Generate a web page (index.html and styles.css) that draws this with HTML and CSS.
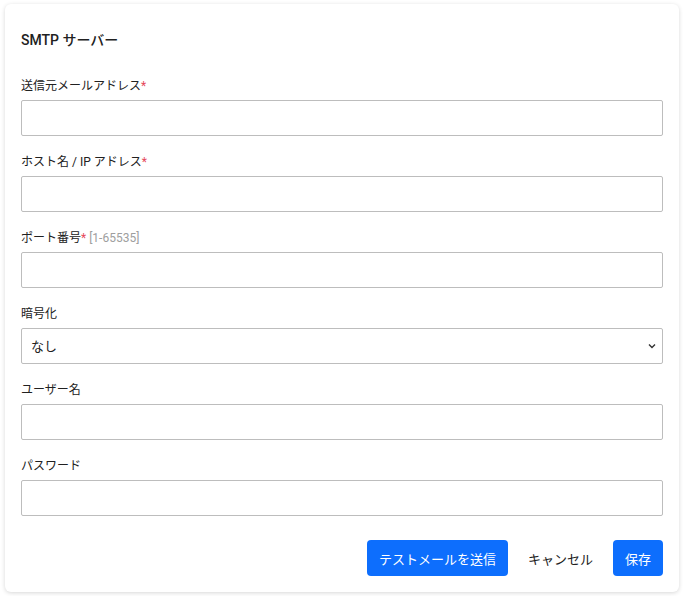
FILE: index.html
```html
<!DOCTYPE html>
<html lang="ja">
<head>
<meta charset="utf-8">
<link rel="stylesheet" href="styles.css">
</head>
<body>
<div class="card">
  <div class="header"><span class="title">SMTP サーバー</span></div>
  <form class="form">
    <div class="field">
      <label class="label">送信元メールアドレス<span class="req">*</span></label>
      <input class="input" type="text">
    </div>
    <div class="field">
      <label class="label">ホスト名 / IP アドレス<span class="req">*</span></label>
      <input class="input" type="text">
    </div>
    <div class="field">
      <label class="label">ポート番号<span class="req">*</span> <span class="hint">[1-65535]</span></label>
      <input class="input" type="text">
    </div>
    <div class="field">
      <label class="label">暗号化</label>
      <div class="select-wrap">
        <select class="input select"><option>なし</option></select>
        <svg class="chev" width="8" height="6" viewBox="0 0 8 6"><path d="M1 1.5 L4 4.5 L7 1.5" fill="none" stroke="#333" stroke-width="1.4"/></svg>
      </div>
    </div>
    <div class="field">
      <label class="label">ユーザー名</label>
      <input class="input" type="text">
    </div>
    <div class="field">
      <label class="label">パスワード</label>
      <input class="input" type="password">
    </div>
    <div class="actions">
      <button type="button" class="btn primary">テストメールを送信</button>
      <button type="button" class="btn plain">キャンセル</button>
      <button type="button" class="btn primary">保存</button>
    </div>
  </form>
</div>
</body>
</html>
```
FILE: styles.css
```css
* { box-sizing: border-box; }
html, body { margin: 0; background: #ffffff; }
body {
  padding: 4px 5px;
  font-family: "Roboto", "Noto Sans CJK JP", sans-serif;
  color: #212121;
}
.card {
  width: 674px;
  height: 588px;
  background: #fff;
  border-radius: 6px;
  box-shadow: 0 1px 4px rgba(0,0,0,0.16);
  padding: 16px;
}
.header { padding: 10px 0; }
.title { font-size: 14px; line-height: 20px; font-weight: 500; display: block; }
.form { margin: 16px 0 0; display: flex; flex-direction: column; gap: 16px; }
.field { display: flex; flex-direction: column; gap: 4px; }
.label { font-size: 12px; line-height: 20px; color: #212121; }
.req { color: #e5485a; }
.hint { color: #9e9e9e; }
.input {
  width: 100%;
  height: 36px;
  border: 1px solid #bdbdbd;
  border-radius: 2px;
  background: #fff;
  font-family: inherit;
  font-size: 13px;
  color: #212121;
  padding: 0 9px;
  margin: 0;
  outline: none;
}
.select-wrap { position: relative; }
.select { appearance: none; -webkit-appearance: none; }
.chev { position: absolute; right: 7px; top: 15px; pointer-events: none; }
.actions { display: flex; justify-content: flex-end; gap: 8px; margin-top: 8px; }
.btn {
  height: 36px;
  padding: 0 12px;
  border: none;
  border-radius: 4px;
  font-family: inherit;
  font-size: 13px;
  cursor: pointer;
}
.primary { background: #0d6efd; color: #fff; }
.plain { background: transparent; color: #212121; }
```
